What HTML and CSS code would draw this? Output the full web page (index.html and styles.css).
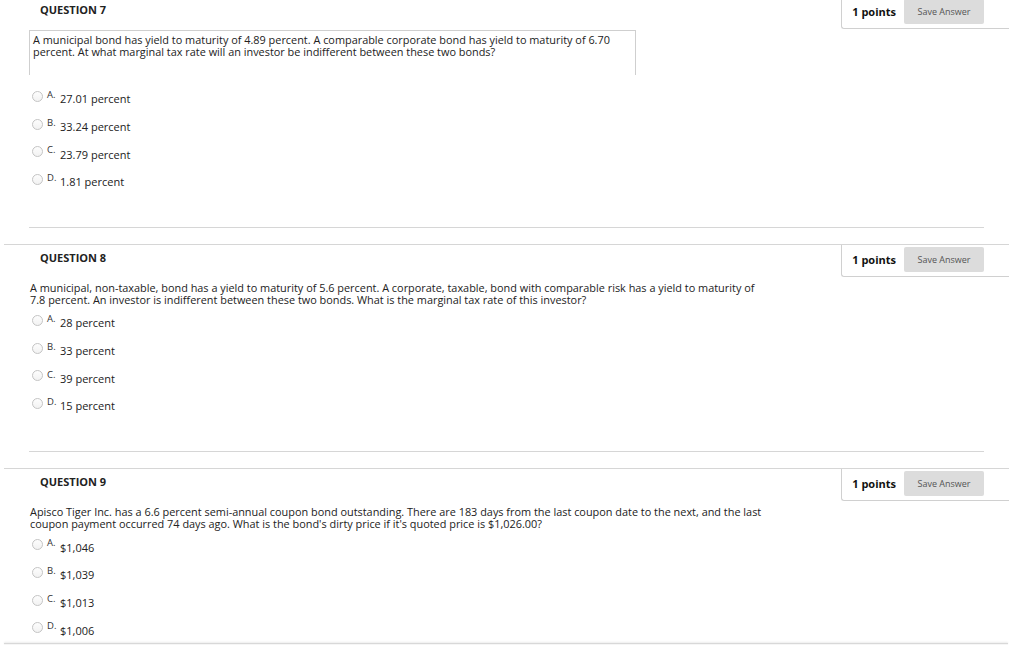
FILE: index.html
```html
<!DOCTYPE html>
<html>
<head>
<meta charset="utf-8">
<link rel="stylesheet" href="styles.css">
</head>
<body>
<div class="page">
  <div class="scroller">
    <section class="question first">
      <div class="q-head">
        <h3 class="q-title">QUESTION 7</h3>
        <div class="points-box">
          <span class="points">1 points</span>
          <button class="save-btn">Save Answer</button>
        </div>
      </div>
      <div class="q-body">
        <div class="q-text boxed">A municipal bond has yield to maturity of 4.89 percent. A comparable corporate bond has yield to maturity of 6.70 percent. At what marginal tax rate will an investor be indifferent between these two bonds?</div>
        <ul class="options">
          <li class="option"><span class="radio"></span><span class="opt-letter">A.</span><span class="opt-text">27.01 percent</span></li>
          <li class="option"><span class="radio"></span><span class="opt-letter">B.</span><span class="opt-text">33.24 percent</span></li>
          <li class="option"><span class="radio"></span><span class="opt-letter">C.</span><span class="opt-text">23.79 percent</span></li>
          <li class="option"><span class="radio"></span><span class="opt-letter">D.</span><span class="opt-text">1.81 percent</span></li>
        </ul>
      </div>
    </section>
    <section class="question">
      <div class="q-head">
        <h3 class="q-title">QUESTION 8</h3>
        <div class="points-box">
          <span class="points">1 points</span>
          <button class="save-btn">Save Answer</button>
        </div>
      </div>
      <div class="q-body">
        <div class="q-text">A municipal, non-taxable, bond has a yield to maturity of 5.6 percent. A corporate, taxable, bond with comparable risk has a yield to maturity of 7.8 percent. An investor is indifferent between these two bonds. What is the marginal tax rate of this investor?</div>
        <ul class="options">
          <li class="option"><span class="radio"></span><span class="opt-letter">A.</span><span class="opt-text">28 percent</span></li>
          <li class="option"><span class="radio"></span><span class="opt-letter">B.</span><span class="opt-text">33 percent</span></li>
          <li class="option"><span class="radio"></span><span class="opt-letter">C.</span><span class="opt-text">39 percent</span></li>
          <li class="option"><span class="radio"></span><span class="opt-letter">D.</span><span class="opt-text">15 percent</span></li>
        </ul>
      </div>
    </section>
    <section class="question">
      <div class="q-head">
        <h3 class="q-title">QUESTION 9</h3>
        <div class="points-box">
          <span class="points">1 points</span>
          <button class="save-btn">Save Answer</button>
        </div>
      </div>
      <div class="q-body">
        <div class="q-text">Apisco Tiger Inc. has a 6.6 percent semi-annual coupon bond outstanding. There are 183 days from the last coupon date to the next, and the last coupon payment occurred 74 days ago. What is the bond's dirty price if it's quoted price is $1,026.00?</div>
        <ul class="options">
          <li class="option"><span class="radio"></span><span class="opt-letter">A.</span><span class="opt-text">$1,046</span></li>
          <li class="option"><span class="radio"></span><span class="opt-letter">B.</span><span class="opt-text">$1,039</span></li>
          <li class="option"><span class="radio"></span><span class="opt-letter">C.</span><span class="opt-text">$1,013</span></li>
          <li class="option"><span class="radio"></span><span class="opt-letter">D.</span><span class="opt-text">$1,006</span></li>
        </ul>
      </div>
    </section>
  </div>
  <div class="footer-bar"></div>
</div>
</body>
</html>
```

FILE: styles.css
```css
html, body {
  margin: 0;
  padding: 0;
  background: #fff;
}
body {
  font-family: "Open Sans", "Liberation Sans", sans-serif;
  color: #222;
}
.page {
  width: 1024px;
  height: 645px;
  display: flex;
  flex-direction: column;
  overflow: hidden;
}
.scroller {
  height: 643px;
  overflow: hidden;
  padding: 0 15px 0 4px;
  flex: none;
}
.footer-bar {
  flex: 1;
  margin: 0 16px 0 4px;
  border-top: 1px solid #d8d8d8;
  box-shadow: 0 -1px 2px rgba(0,0,0,0.08);
  background: #f6f6f6;
}
.question {
  border-top: 1px solid #d6d6d6;
  margin-bottom: 16px;
}
.question.first {
  margin-top: -4px;
}
.q-head {
  display: flex;
  align-items: flex-start;
  height: 33px;
}
.q-title {
  margin: 0;
  padding: 6px 0 0 36px;
  font-size: 11px;
  line-height: 14px;
  font-weight: 700;
  color: #222;
}
.points-box {
  margin-left: auto;
  height: 32px;
  box-sizing: border-box;
  border-left: 1px solid #d0d0d0;
  border-bottom: 1px solid #d0d0d0;
  border-bottom-left-radius: 3px;
  display: flex;
  align-items: flex-start;
  padding: 2px 25px 0 10px;
}
.points {
  font-size: 11px;
  font-weight: 700;
  line-height: 14px;
  margin-top: 6px;
  color: #111;
}
.save-btn {
  margin-left: 8px;
  width: 80px;
  height: 25px;
  border: none;
  border-radius: 2px;
  background: #dcdcdc;
  color: #555;
  font-family: "Open Sans", "Liberation Sans", sans-serif;
  font-size: 9px;
  padding: 0;
}
.q-body {
  margin: 0 25px;
  border-bottom: 1px solid #d6d6d6;
  padding-bottom: 31px;
}
.q-text {
  font-size: 10.9px;
  line-height: 12.5px;
  color: #222;
  border: 1px solid transparent;
  padding: 2.5px 216px 0 0;
  margin-bottom: 2px;
}
.q-text.boxed {
  border-color: #cfcfcf;
  border-bottom: none;
  padding: 2.5px 12px 16px 3px;
  margin-right: 348px;
  margin-bottom: 11px;
}
.options {
  list-style: none;
  margin: 0;
  padding: 0;
}
.option {
  display: flex;
  align-items: flex-start;
  height: 27.67px;
}
.radio {
  width: 11px;
  height: 11px;
  box-sizing: border-box;
  border: 1px solid #c4c4c4;
  border-radius: 50%;
  background: linear-gradient(#fdfdfd, #f2f2f2);
  margin: 5.5px 0 0 3px;
  flex: none;
}
.opt-letter {
  font-size: 9.5px;
  line-height: 10px;
  margin: 4.6px 0 0 4px;
  color: #333;
  width: 13px;
}
.opt-text {
  font-size: 11px;
  line-height: 14px;
  margin-top: 6.8px;
  color: #222;
}
```
